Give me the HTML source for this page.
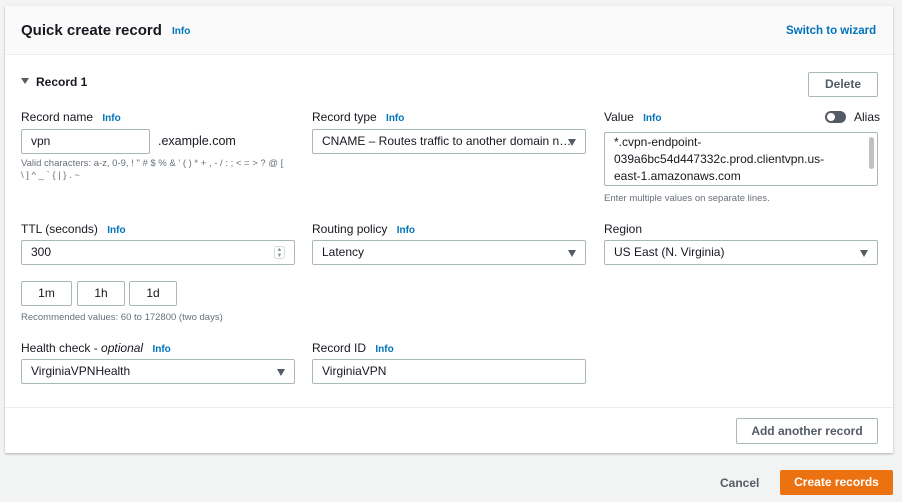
<!DOCTYPE html>
<html><head><meta charset="utf-8"><style>
*{box-sizing:border-box;margin:0;padding:0}
body{width:902px;height:502px;background:#f2f3f3;font-family:"Liberation Sans",Arial,sans-serif;color:#16191f;position:relative;overflow:hidden;font-size:12px}
.a{position:absolute;white-space:nowrap}
.card{position:absolute;left:5px;top:6px;width:888px;height:447px;background:#fff;box-shadow:0 1px 2px rgba(0,28,36,.3)}
.hdr{position:absolute;left:5px;top:6px;width:888px;height:49px;background:#fafafa;border-bottom:1px solid #eaeded}
.info{color:#0073bb;font-weight:bold;font-size:10px}
.lbl{font-size:12px}
.in{position:absolute;border:1px solid #aab7b8;border-radius:2px;background:#fff;height:25px;padding-left:9px;line-height:23px;font-size:12px;overflow:hidden;white-space:nowrap}
.tri{position:absolute;right:9px;top:9px;width:0;height:0;border-left:4.5px solid transparent;border-right:4.5px solid transparent;border-top:7px solid #545b64}
.btn{position:absolute;border:1px solid #aab7b8;border-radius:2px;background:#fff;text-align:center;font-weight:bold;font-size:12px;color:#545b64}
.help{font-size:9.5px;color:#687078}
</style></head><body>
<div class="card"></div>
<div class="hdr"></div>
<div class="a" style="left:21px;top:22px;font-size:15px;font-weight:bold">Quick create record</div>
<div class="a info" style="left:172px;top:26px">Info</div>
<div class="a" style="left:786px;top:25px;color:#0073bb;font-weight:bold;font-size:11.5px">Switch to wizard</div>

<div class="a" style="left:21px;top:78px;width:0;height:0;border-left:4px solid transparent;border-right:4px solid transparent;border-top:6px solid #545b64"></div>
<div class="a" style="left:36px;top:75px;font-weight:bold;font-size:12px">Record 1</div>
<div class="btn" style="left:808px;top:72px;width:70px;height:25px;line-height:23px">Delete</div>

<div class="a lbl" style="left:21px;top:110px">Record name <span class="info" style="margin-left:6px">Info</span></div>
<div class="a lbl" style="left:312px;top:110px">Record type <span class="info" style="margin-left:6px">Info</span></div>
<div class="a lbl" style="left:604px;top:110px">Value <span class="info" style="margin-left:6px">Info</span></div>
<div class="a" style="left:825px;top:111px;width:21px;height:12px;border-radius:6px;background:#545b64"></div>
<div class="a" style="left:827px;top:113px;width:8px;height:8px;border-radius:50%;background:#fff"></div>
<div class="a lbl" style="left:854px;top:110px">Alias</div>

<div class="in" style="left:21px;top:129px;width:129px">vpn</div>
<div class="a" style="left:158px;top:134px;font-size:12.5px">.example.com</div>
<div class="a help" style="left:21px;top:158px;line-height:12px">Valid characters: a-z, 0-9, ! " # $ % &amp; ' ( ) * + , - / : ; &lt; = &gt; ? @ [<br>\ ] ^ _ ` { | } . ~</div>
<div class="in" style="left:312px;top:129px;width:274px;padding-right:26px">CNAME – Routes traffic to another domain n…<div class="tri"></div></div>
<div class="in" style="left:604px;top:132px;width:274px;height:54px;line-height:17px;padding-top:1px;white-space:normal">*.cvpn-endpoint-<br>039a6bc54d447332c.prod.clientvpn.us-<br>east-1.amazonaws.com
<div style="position:absolute;right:3px;top:4px;width:5px;height:32px;border-radius:3px;background:#c1c1c1"></div></div>
<div class="a help" style="left:604px;top:193px">Enter multiple values on separate lines.</div>

<div class="a lbl" style="left:21px;top:222px">TTL (seconds) <span class="info" style="margin-left:6px">Info</span></div>
<div class="a lbl" style="left:312px;top:222px">Routing policy <span class="info" style="margin-left:6px">Info</span></div>
<div class="a lbl" style="left:604px;top:222px">Region</div>
<div class="in" style="left:21px;top:240px;width:274px">300<div style="position:absolute;right:9px;top:5px;width:11px;height:13px;border-radius:3px;border:1px solid #d5dbdb;font-size:6px;line-height:6px;text-align:center;color:#879596">▲<br>▼</div></div>
<div class="in" style="left:312px;top:240px;width:274px">Latency<div class="tri"></div></div>
<div class="in" style="left:604px;top:240px;width:274px">US East (N. Virginia)<div class="tri"></div></div>

<div class="btn" style="left:21px;top:281px;width:51px;height:25px;line-height:23px;color:#16191f;font-weight:normal">1m</div>
<div class="btn" style="left:77px;top:281px;width:48px;height:25px;line-height:23px;color:#16191f;font-weight:normal">1h</div>
<div class="btn" style="left:129px;top:281px;width:48px;height:25px;line-height:23px;color:#16191f;font-weight:normal">1d</div>
<div class="a help" style="left:21px;top:312px">Recommended values: 60 to 172800 (two days)</div>

<div class="a lbl" style="left:21px;top:341px">Health check - <i>optional</i> <span class="info" style="margin-left:6px">Info</span></div>
<div class="a lbl" style="left:312px;top:341px">Record ID <span class="info" style="margin-left:6px">Info</span></div>
<div class="in" style="left:21px;top:359px;width:274px">VirginiaVPNHealth<div class="tri"></div></div>
<div class="in" style="left:312px;top:359px;width:274px">VirginiaVPN</div>

<div class="a" style="left:5px;top:407px;width:888px;height:1px;background:#eaeded"></div>
<div class="btn" style="left:736px;top:418px;width:142px;height:26px;line-height:24px">Add another record</div>

<div class="a" style="left:720px;top:476px;font-weight:bold;color:#545b64">Cancel</div>
<div class="a" style="left:780px;top:470px;width:113px;height:25px;background:#ec7211;border-radius:2px;color:#fff;font-weight:bold;text-align:center;line-height:25px">Create records</div>
</body></html>
